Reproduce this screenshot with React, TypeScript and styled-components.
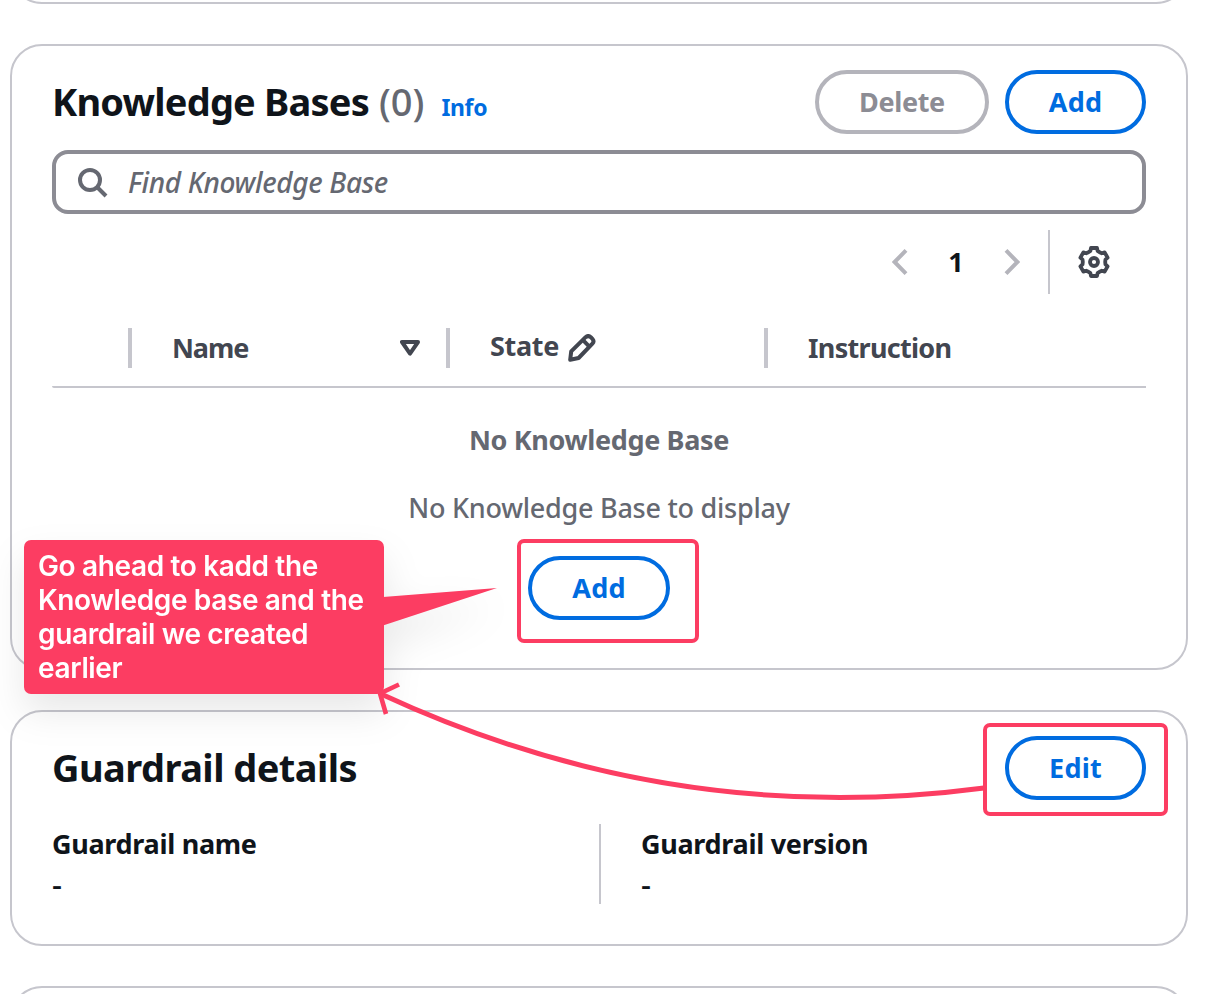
import React from 'react';
import styled, { createGlobalStyle, css } from 'styled-components';

const color = {
  text: '#0f141a',
  heading: '#424650',
  muted: '#656871',
  border: '#c6c6cd',
  inputBorder: '#8c8c94',
  disabled: '#b4b4bb',
  link: '#006ce0',
  accent: '#fc3d62',
};

const GlobalStyle = createGlobalStyle`
  *, *::before, *::after { box-sizing: border-box; }
  body {
    margin: 0;
    background: #fff;
    color: ${color.text};
    font-family: 'Noto Sans', 'Open Sans', sans-serif;
    font-size: 27px;
    line-height: 40px;
  }
  h2, p, dl, dt, dd { margin: 0; }
`;

const Page = styled.main`
  position: relative;
  width: 1218px;
  height: 994px;
  overflow: hidden;
  display: flex;
  flex-direction: column;
  gap: 40px;
  padding: 0 30px 0 10px;
`;

const Card = styled.section<{ $height: number }>`
  flex: none;
  height: ${({ $height }) => $height}px;
  border: 2px solid ${color.border};
  border-radius: 32px;
  background: #fff;
  padding: 24px 40px;
`;

const PreviousCard = styled(Card)`
  margin-top: -96px;
`;

const CardHeader = styled.header`
  display: flex;
  align-items: center;
  justify-content: space-between;
  height: 64px;
`;

const TitleGroup = styled.div`
  display: flex;
  align-items: baseline;
`;

const Title = styled.h2<{ $tracking: number }>`
  font-size: 38px;
  font-weight: 700;
  line-height: 46px;
  padding-bottom: 2px;
  letter-spacing: ${({ $tracking }) => $tracking}px;
  white-space: nowrap;
`;

const Counter = styled.span`
  margin-left: 10px;
  font-size: 38px;
  font-weight: 500;
  line-height: 48px;
  color: ${color.muted};
`;

const InfoLink = styled.a`
  margin-left: 17px;
  font-size: 23px;
  font-weight: 700;
  letter-spacing: -0.35px;
  color: ${color.link};
`;

const Actions = styled.div`
  display: flex;
  gap: 16px;
`;

const Button = styled.button<{ $width: number }>`
  width: ${({ $width }) => $width}px;
  height: 64px;
  padding: 0;
  border: 4px solid ${color.link};
  border-radius: 32px;
  background: #fff;
  color: ${color.link};
  font: 700 27px/40px 'Noto Sans', sans-serif;
  letter-spacing: 0.2px;

  &:disabled {
    border-color: ${color.disabled};
    color: ${color.inputBorder};
    letter-spacing: -0.35px;
  }
`;

const SearchBox = styled.label`
  display: flex;
  align-items: center;
  gap: 20px;
  height: 64px;
  margin-top: 16px;
  padding: 0 20px;
  border: 4px solid ${color.inputBorder};
  border-radius: 16px;
  color: ${color.muted};
`;

const SearchInput = styled.input`
  flex: 1;
  padding: 0;
  border: 0;
  outline: 0;
  background: none;
  font: italic 500 28px/40px 'Noto Sans', sans-serif;
  letter-spacing: -0.35px;

  &::placeholder {
    color: ${color.muted};
    opacity: 1;
  }
`;

const Toolbar = styled.div`
  display: flex;
  align-items: center;
  justify-content: flex-end;
  height: 64px;
  margin-top: 16px;
`;

const Pagination = styled.nav`
  display: flex;
  align-items: center;
  gap: 40px;
  padding-right: 28px;
  color: ${color.disabled};
`;

const PageNumber = styled.span`
  width: 16px;
  text-align: center;
  font-weight: 700;
  color: ${color.text};
`;

const Preferences = styled.div`
  display: flex;
  align-items: center;
  width: 98px;
  height: 64px;
  padding-left: 28px;
  border-left: 2px solid ${color.border};
  color: ${color.heading};
`;

const TableHead = styled.div`
  display: grid;
  grid-template-columns: 76px 318px 318px 1fr;
  align-items: start;
  height: 80px;
  margin-top: 14px;
  padding-top: 20px;
  border-bottom: 2px solid ${color.border};
  border-bottom-left-radius: 2px;
  color: ${color.heading};
  font-weight: 700;
`;

const ColumnHead = styled.div<{ $tracking: number; $raised?: boolean }>`
  display: flex;
  align-items: center;
  height: 40px;
  padding: 0 26px 0 40px;
  border-left: 4px solid ${color.border};
  letter-spacing: ${({ $tracking }) => $tracking}px;
  ${({ $raised }) => $raised && css`
    padding-bottom: 4px;
  `}
`;

const SortSlot = styled.span`
  display: flex;
  margin-left: auto;
`;

const EditSlot = styled.span`
  display: flex;
  margin-left: 9px;
  padding-top: 4px;
`;

const EmptyState = styled.div`
  display: flex;
  flex-direction: column;
  align-items: center;
  padding-top: 32px;
  color: ${color.muted};
`;

const EmptyTitle = styled.p`
  font-weight: 700;
  letter-spacing: -0.35px;
`;

const EmptyText = styled.p`
  margin: 28px 0;
  font-weight: 500;
  letter-spacing: -0.25px;
`;

const Details = styled.dl`
  display: grid;
  grid-template-columns: 547px 1fr;
  margin-top: 24px;
`;

const Detail = styled.div<{ $divided?: boolean }>`
  height: 80px;
  ${({ $divided }) => $divided && css`
    padding-left: 40px;
    border-left: 2px solid ${color.border};
  `}
`;

const DetailLabel = styled.dt`
  height: 40px;
  line-height: 40px;
  font-weight: 700;
  letter-spacing: -0.3px;
`;

const DetailValue = styled.dd`
  height: 40px;
  font-size: 31px;
  font-weight: 500;
  line-height: 40px;
`;

const Highlight = styled.div<{ $x: number; $y: number; $w: number; $h: number }>`
  position: absolute;
  left: ${({ $x }) => $x}px;
  top: ${({ $y }) => $y}px;
  width: ${({ $w }) => $w}px;
  height: ${({ $h }) => $h}px;
  border: 4px solid ${color.accent};
  border-radius: 7px;
`;

const Callout = styled.aside`
  position: absolute;
  left: 24px;
  top: 540px;
  display: flex;
  filter: drop-shadow(0 18px 18px rgba(0, 0, 0, 0.09));
`;

const CalloutText = styled.p`
  width: 360px;
  height: 154px;
  padding: 9px 14px;
  border-radius: 7px;
  background: ${color.accent};
  color: #fff;
  font: 600 28px/34px Inter, sans-serif;
  letter-spacing: -0.36px;
  white-space: pre-line;
`;

const CalloutPointer = styled.svg`
  margin: 46px 0 0 -1px;
`;

const ArrowLayer = styled.svg`
  position: absolute;
  left: 0;
  top: 0;
  pointer-events: none;
`;

const SearchIcon = () => (
  <svg width="32" height="32" viewBox="0 0 16 16" fill="none" stroke="currentColor" strokeWidth="2">
    <circle cx="7" cy="7" r="5" />
    <path d="m10.5 10.5 4.5 4.5" />
  </svg>
);

const Chevron = ({ flip = false }: { flip?: boolean }) => (
  <svg width="16" height="28" viewBox="0 0 16 28" fill="none" stroke="currentColor" strokeWidth="4">
    <path d={flip ? 'M2 2.4 13.4 14 2 25.6' : 'M14 2.4 2.6 14 14 25.6'} />
  </svg>
);

const SortIcon = () => (
  <svg width="20" height="16" viewBox="0 0 20 16" fill="none" stroke="currentColor" strokeWidth="4" strokeLinejoin="round">
    <path d="M2 2h16l-8 11.6z" />
  </svg>
);

const PencilIcon = () => (
  <svg width="28" height="28" viewBox="0 0 28 28" fill="none" stroke="currentColor" strokeWidth="4" strokeLinejoin="round">
    <path d="M2.2 25.8 3.2 17.4 17.6 3.2q2.6-2.3 5.2 0l1.6 1.6q2.2 2.4 0 4.8L10.6 24z" />
    <path d="m15 6.2 6.6 6.6" />
  </svg>
);

// Six teeth, each described by [angle offset in degrees, radius] pairs.
const toothProfile: [number, number][] = [[-30, 11.2], [-18, 11.7], [-12, 14.3], [12, 14.3], [18, 11.7]];
const gearPoints = [0, 60, 120, 180, 240, 300]
  .flatMap((tooth) =>
    toothProfile.map(([offset, radius]) => {
      const angle = ((tooth + offset) * Math.PI) / 180;
      return `${(16 + radius * Math.sin(angle)).toFixed(2)},${(16 - radius * Math.cos(angle)).toFixed(2)}`;
    }),
  )
  .join(' ');

const GearIcon = () => (
  <svg width="32" height="32" viewBox="0 0 32 32" fill="none" stroke="currentColor" strokeWidth="3.8" strokeLinejoin="round">
    <polygon points={gearPoints} />
    <circle cx="16" cy="16" r="4" />
  </svg>
);

export default function App() {
  return (
    <>
      <GlobalStyle />
      <Page>
        <PreviousCard $height={100} />

        <Card $height={626}>
          <CardHeader>
            <TitleGroup>
              <Title $tracking={-0.8}>Knowledge Bases</Title>
              <Counter>(0)</Counter>
              <InfoLink>Info</InfoLink>
            </TitleGroup>
            <Actions>
              <Button $width={174} disabled>Delete</Button>
              <Button $width={141}>Add</Button>
            </Actions>
          </CardHeader>
          <SearchBox>
            <SearchIcon />
            <SearchInput placeholder="Find Knowledge Base" />
          </SearchBox>
          <Toolbar>
            <Pagination>
              <Chevron />
              <PageNumber>1</PageNumber>
              <Chevron flip />
            </Pagination>
            <Preferences>
              <GearIcon />
            </Preferences>
          </Toolbar>
          <TableHead>
            <span />
            <ColumnHead $tracking={-1.1}>
              Name
              <SortSlot><SortIcon /></SortSlot>
            </ColumnHead>
            <ColumnHead $tracking={-0.3} $raised>
              State
              <EditSlot><PencilIcon /></EditSlot>
            </ColumnHead>
            <ColumnHead $tracking={-0.7}>Instruction</ColumnHead>
          </TableHead>
          <EmptyState>
            <EmptyTitle>No Knowledge Base</EmptyTitle>
            <EmptyText>No Knowledge Base to display</EmptyText>
            <Button $width={142}>Add</Button>
          </EmptyState>
        </Card>

        <Card $height={236}>
          <CardHeader>
            <TitleGroup>
              <Title $tracking={-0.55}>Guardrail details</Title>
            </TitleGroup>
            <Button $width={141}>Edit</Button>
          </CardHeader>
          <Details>
            <Detail>
              <DetailLabel>Guardrail name</DetailLabel>
              <DetailValue>-</DetailValue>
            </Detail>
            <Detail $divided>
              <DetailLabel>Guardrail version</DetailLabel>
              <DetailValue>-</DetailValue>
            </Detail>
          </Details>
        </Card>

        <Card $height={100} />

        <Callout>
          <CalloutText>
            {'Go ahead to kadd the\nKnowledge base and the\nguardrail we created\nearlier'}
          </CalloutText>
          <CalloutPointer width="115" height="42" viewBox="0 0 115 42">
            <path d="M0 11 114 2 0 39.500z" fill={color.accent} />
          </CalloutPointer>
        </Callout>
        <Highlight $x={517} $y={539} $w={182} $h={104} />
        <Highlight $x={983} $y={723} $w={185} $h={93} />
        <ArrowLayer width="1218" height="994" fill="none" stroke={color.accent}>
          <path d="M984 788Q672 829 381 694" strokeWidth="5" />
          <path d="M399 684.500 380 693.500 386 714" strokeWidth="4.600" />
        </ArrowLayer>
      </Page>
    </>
  );
}
